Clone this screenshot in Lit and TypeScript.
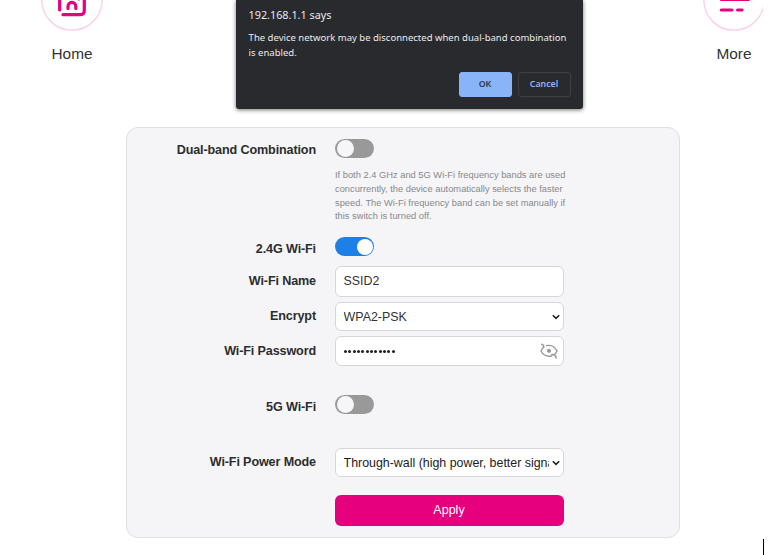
import { LitElement, html, css, svg } from "lit";
import { customElement, property } from "lit/decorators.js";

@customElement("toggle-switch")
class ToggleSwitch extends LitElement {
  @property({ type: Boolean }) on = false;
  static styles = css`
    :host { display: block; height: 19px; }
    .track { box-sizing: border-box; width: 39px; height: 19px; border-radius: 10px; background: #999; padding: 0 2px; display: flex; align-items: center; }
    .track.on { background: #1e80e6; justify-content: flex-end; padding-right: 1px; }
    .knob { width: 17px; height: 17px; border-radius: 50%; background: #f6f6f8; }
    .on .knob { background: #fff; width: 16px; height: 16px; }
  `;
  render() {
    return html`<div class="track ${this.on ? "on" : ""}"><div class="knob"></div></div>`;
  }
}

const chevron = html`<svg class="chev" width="8" height="6" viewBox="0 0 8 6">${svg`<path d="M.8 1.300 L4 4.400 L7.200 1.300" fill="none" stroke="#222" stroke-width="1.6"/>`}</svg>`;

@customElement("app-root")
class AppRoot extends LitElement {
  static styles = css`
    :host { display: block; position: relative; width: 769px; height: 555px; overflow: hidden; background: #fff; font-family: "Liberation Sans", Arial, sans-serif; color: #333; }
    .nav { display: flex; justify-content: space-between; width: 763px; height: 127px; overflow: hidden; }
    .item { width: 62px; margin-left: 41px; margin-top: -31px; display: flex; flex-direction: column; align-items: center; }
    .item.more { margin: -31px -2px 0 0; }
    .ring { display: block; width: 62px; height: 62px; flex: none; }
    .cap { font-size: 15.4px; line-height: 20px; margin-top: 13px; white-space: nowrap; }
    .card { box-sizing: border-box; width: 554px; height: 411px; margin-left: 126px; border: 1px solid #e0e0e2; border-radius: 12px; background: #f5f5f8; display: grid; grid-template-columns: 189px 229px; column-gap: 19px; grid-template-rows: 109px 29px 36px 34px 59px 53px 47px 31px; align-content: start; }
    .label { font-weight: bold; font-size: 12.6px; letter-spacing: -0.13px; line-height: 16px; text-align: right; white-space: nowrap; padding-top: 7px; color: #2d2d2d; }
    .label.first { padding-top: 14px; }
    .label.g { padding-top: 4px; }
    .label.up { padding-top: 6px; }
    .first-sw { padding-top: 11px; }
    .hint { margin: 11px 0 0; font-size: 9.32px; line-height: 13.8px; color: #888; white-space: nowrap; }
    .field { box-sizing: border-box; height: 30px; border: 1px solid #d6d6d9; border-radius: 6px; background: #fff; display: flex; align-items: center; font-size: 12.4px; padding: 0 3px 0 7.6px; white-space: nowrap; overflow: hidden; }
    .field.name { height: 31px; padding-bottom: 1px; }
    .field.sel { height: 29px; }
    .value { flex: 1; min-width: 0; overflow: hidden; margin-right: 3px; }
    .dark { color: #1c1c1c; }
    .chev { flex: none; }
    .dots { display: flex; gap: 1.35px; flex: 1; padding-left: .4px; }
    .dot { width: 3px; height: 3px; border-radius: 50%; background: #222; }
    .eye { flex: none; margin-right: 1px; }
    .apply { grid-column: 2; height: 31px; border: 0; border-radius: 6px; background: #e6007e; color: #fff; font: 12.5px "Liberation Sans", Arial, sans-serif; padding: 0 1px 1px 0; }
    .dialog { position: absolute; box-sizing: border-box; left: 236px; top: 0; width: 347px; height: 109px; background: #292a2d; border-radius: 0 0 3px 3px; box-shadow: 0 1px 4px rgba(0,0,0,.55); padding: 7px 12px 0 12.6px; color: #e8eaed; font-family: "Noto Sans", sans-serif; }
    .title { font-size: 10.8px; line-height: 15px; }
    .msg { font-size: 9.52px; line-height: 15px; margin-top: 8px; white-space: nowrap; }
    .btns { display: flex; justify-content: flex-end; gap: 6px; margin-top: 12px; }
    .btn { box-sizing: border-box; width: 53px; height: 25px; border: 1px solid #3c4043; border-radius: 3px; background: transparent; color: #8ab4f8; font: 600 8.8px "Noto Sans", sans-serif; padding: 0 1px 1px 0; }
    .btn.ok { background: #8ab4f8; border-color: #8ab4f8; color: #28364f; }
    .caret { position: absolute; left: 763px; top: 539px; width: 1px; height: 16px; background: #000; }
  `;
  render() {
    return html`
      <div class="nav">
        <div class="item">
          <svg class="ring" viewBox="41 -31 62 62"><circle cx="72" cy="0" r="30.200" fill="none" stroke="#fbd3e8" stroke-width="1.500"/><g fill="none" stroke="#e6007e" stroke-width="3.200" stroke-linecap="round" stroke-linejoin="round"><path d="M59.700 10V-7L72-15L84.300-7V10.500Q84.300 14.700 80 14.700H63"/><path d="M68 8.600V6.500A3.900 4.200 0 0 1 75.800 6.500V8.600"/></g><path d="M77.500 0H80" stroke="#777"/></svg>
          <div class="cap">Home</div>
        </div>
        <div class="item more">
          <svg class="ring" viewBox="703 -31 62 62"><circle cx="734" cy="0" r="30.200" fill="none" stroke="#fbd3e8" stroke-width="1.500"/><g fill="none" stroke="#e6007e" stroke-width="3.200" stroke-linecap="round"><path d="M721.300 -.6H748.500M721.300 10H732M737.600 10H742"/></g></svg>
          <div class="cap">More</div>
        </div>
      </div>
      <div class="card">
        <div class="label first">Dual-band Combination</div>
        <div class="first-sw"><toggle-switch></toggle-switch>
          <p class="hint">If both 2.4 GHz and 5G Wi-Fi frequency bands are used<br>concurrently, the device automatically selects the faster<br>speed. The Wi-Fi frequency band can be set manually if<br>this switch is turned off.</p>
        </div>
        <div class="label g">2.4G Wi-Fi</div><toggle-switch on></toggle-switch>
        <div class="label">Wi-Fi Name</div><div class="field name">SSID2</div>
        <div class="label up">Encrypt</div><div class="field sel"><span class="value">WPA2-PSK</span>${chevron}</div>
        <div class="label">Wi-Fi Password</div>
        <div class="field"><span class="dots">${Array.from({ length: 12 }, () => html`<i class="dot"></i>`)}</span>
          <svg class="eye" width="20" height="18" viewBox="0 0 20 18"><g fill="none" stroke="#999" stroke-width="1.400" stroke-linecap="round"><path d="M7.500 3.600Q14.500 2.200 18 9Q17.200 11 15.200 12.700M12.800 14Q5.500 15.500 2 9Q2.800 6.800 5 4.900M2.600 2.200Q4.600 2.600 5 4.900M12.800 12.500Q16.500 12.300 17.300 16"/></g><circle cx="10" cy="8.800" r="2.100" fill="#999"/></svg>
        </div>
        <div class="label g">5G Wi-Fi</div><toggle-switch></toggle-switch>
        <div class="label up">Wi-Fi Power Mode</div><div class="field sel dark"><span class="value">Through-wall (high power, better signal)</span>${chevron}</div>
        <button class="apply">Apply</button>
      </div>
      <div class="dialog">
        <div class="title">192.168.1.1 says</div>
        <div class="msg">The device network may be disconnected when dual-band combination<br>is enabled.</div>
        <div class="btns"><button class="btn ok">OK</button><button class="btn">Cancel</button></div>
      </div>
      <div class="caret"></div>`;
  }
}
